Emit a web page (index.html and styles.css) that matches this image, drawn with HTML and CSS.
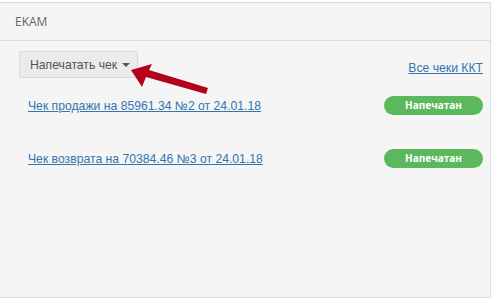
FILE: index.html
```html
<!DOCTYPE html>
<html>
<head>
  <meta charset="UTF-8">
  <title>EKAM</title>
  <link rel="stylesheet" href="styles.css">
</head>
<body>
<div class="panel">
  <div class="panel-heading">EKAM</div>
  <div class="panel-body">
    <div class="toolbar">
      <button class="btn">Напечатать чек <span class="caret"></span></button>
      <a href="#" class="all-link">Все чеки ККТ</a>
    </div>
    <div class="receipt">
      <a href="#">Чек продажи на 85961.34 №2 от 24.01.18</a>
      <span class="badge">Напечатан</span>
    </div>
    <div class="receipt">
      <a href="#">Чек возврата на 70384.46 №3 от 24.01.18</a>
      <span class="badge">Напечатан</span>
    </div>
  </div>
  <svg class="arrow" width="90" height="40" viewBox="125 60 90 40">
    <polygon points="130,70 151,64 148,70 207,88 205,94 145,77 141,87" fill="#b3001b"/>
  </svg>
</div>
</body>
</html>
```
FILE: styles.css
```css
body { margin: 0; background: #fff; font-family: "Liberation Sans", Arial, sans-serif; }
.panel { position: relative; margin: 2px 0 0 -1px; width: 490px; height: 294px; background: #f5f5f5; border: 1px solid #dcdcdc; }
.panel-heading { height: 37px; line-height: 37px; padding-left: 15px; border-bottom: 1px solid #dcdcdc; font-family: "Open Sans", sans-serif; font-size: 12px; color: #666; }
.panel-body { padding: 10px 7px 0 19px; }
.toolbar { display: flex; justify-content: space-between; align-items: flex-end; height: 27px; }
.btn { height: 27px; width: 119px; padding: 0 0 0 10px; text-align: left; background: #ebebeb; border: 1px solid #dadada; border-radius: 2px; color: #555; font-family: "Liberation Sans", Arial, sans-serif; font-size: 12.2px; }
.caret { display: inline-block; width: 0; height: 0; margin-left: 1px; vertical-align: middle; border-top: 4px solid #555; border-left: 4px solid transparent; border-right: 4px solid transparent; }
.all-link { color: #3474b0; font-size: 12.2px; line-height: 15px; margin-bottom: 2px; }
.receipt { display: flex; justify-content: space-between; align-items: center; height: 19px; padding-left: 9px; margin-top: 18px; }
.receipt + .receipt { margin-top: 34px; }
.receipt a { color: #3474b0; font-size: 12.2px; }
.badge { width: 99px; height: 19px; line-height: 19px; border-radius: 10px; background: #5cb85c; color: #fff; text-align: center; font-family: "Open Sans", sans-serif; font-weight: bold; font-size: 10px; }
.arrow { position: absolute; left: 126px; top: 57px; }
```
